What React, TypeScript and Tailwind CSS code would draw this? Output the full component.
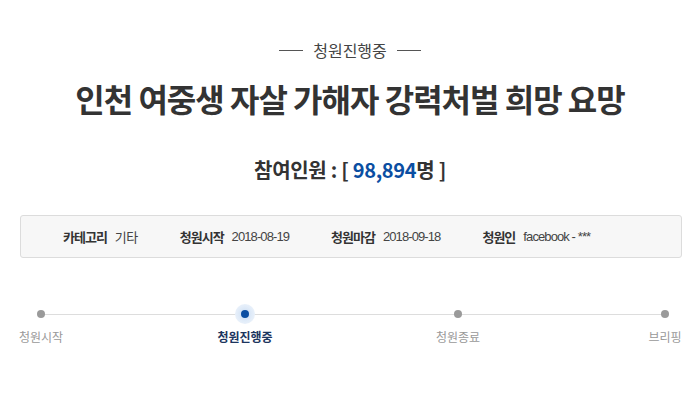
import React from "react";

const KR = { fontFamily: '"Noto Sans CJK KR", "Noto Sans", sans-serif' };
const NUM = { fontFamily: '"Liberation Sans", "Noto Sans CJK KR", sans-serif' };

function InfoItem({ label, value, num }: { label: string; value: string; num?: boolean }) {
  return (
    <div className="flex items-center gap-[8px]">
      <span className="text-[13px] font-bold text-[#333] tracking-[-1px]" style={KR}>{label}</span>
      <span
        className={`text-[13px] text-[#444] ${num ? "tracking-[-0.9px]" : "tracking-[-0.5px]"}`}
        style={num ? NUM : KR}
      >
        {value}
      </span>
    </div>
  );
}

function Step({ label, active, width, ml }: { label: string; active?: boolean; width: string; ml: string }) {
  return (
    <div className={`flex flex-col items-center ${width} ${ml}`}>
      <div className="relative flex h-[8px] w-[8px] items-center justify-center">
        {active && <div className="absolute h-[20px] w-[20px] rounded-full bg-[radial-gradient(circle,#c9dcf3_0%,#e3edf9_55%,#f3f7fc_100%)]" />}
        <div className={`relative h-[8px] w-[8px] rounded-full ${active ? "bg-[#0b4ea2]" : "bg-[#9a9a9a]"}`} />
      </div>
      <div
        className={`mt-[10px] h-[18px] text-[12px] leading-[18px] whitespace-nowrap ${active ? "font-bold text-[#1c355e]" : "text-[#999]"}`}
        style={KR}
      >
        {label}
      </div>
    </div>
  );
}

export default function App() {
  return (
    <div className="w-[700px] h-[409px] bg-white flex flex-col items-center" style={KR}>
      <div className="pt-[40px] flex items-center gap-[10px] h-[60px]">
        <div className="w-[24px] h-px bg-[#555]" />
        <span className="text-[16px] leading-[20px] text-[#444]">청원진행중</span>
        <div className="w-[24px] h-px bg-[#555]" />
      </div>
      <h1 className="mt-[16px] text-[32px] leading-[44px] font-bold text-[#333] tracking-[-1px]">
        인천 여중생 자살 가해자 강력처벌 희망 요망
      </h1>
      <div className="mt-[36px] text-[20px] leading-[28px] font-bold text-[#333] tracking-[-0.3px]">
        참여인원 : [ <span className="text-[#0b4ea2]">98,894</span>명 ]
      </div>
      <div className="mt-[31px] w-[662px] h-[43px] self-start ml-[20px] rounded-[3px] border border-[#dcdcdc] bg-[#f7f7f7] flex items-center pl-[42px] gap-[42px]">
        <InfoItem label="카테고리" value="기타" />
        <InfoItem label="청원시작" value="2018-08-19" num />
        <InfoItem label="청원마감" value="2018-09-18" num />
        <InfoItem label="청원인" value="facebook - ***" num />
      </div>
      <div className="relative mt-[52px] w-[700px] flex">
        <div className="absolute left-[41px] top-[4px] w-[624px] h-px bg-[#dddddd]" />
        <Step label="청원시작" width="w-[82px]" ml="ml-0" />
        <Step label="청원진행중" active width="w-[80px]" ml="ml-[123px]" />
        <Step label="청원종료" width="w-[80px]" ml="ml-[133px]" />
        <Step label="브리핑" width="w-[70px]" ml="ml-[132px]" />
      </div>
    </div>
  );
}
